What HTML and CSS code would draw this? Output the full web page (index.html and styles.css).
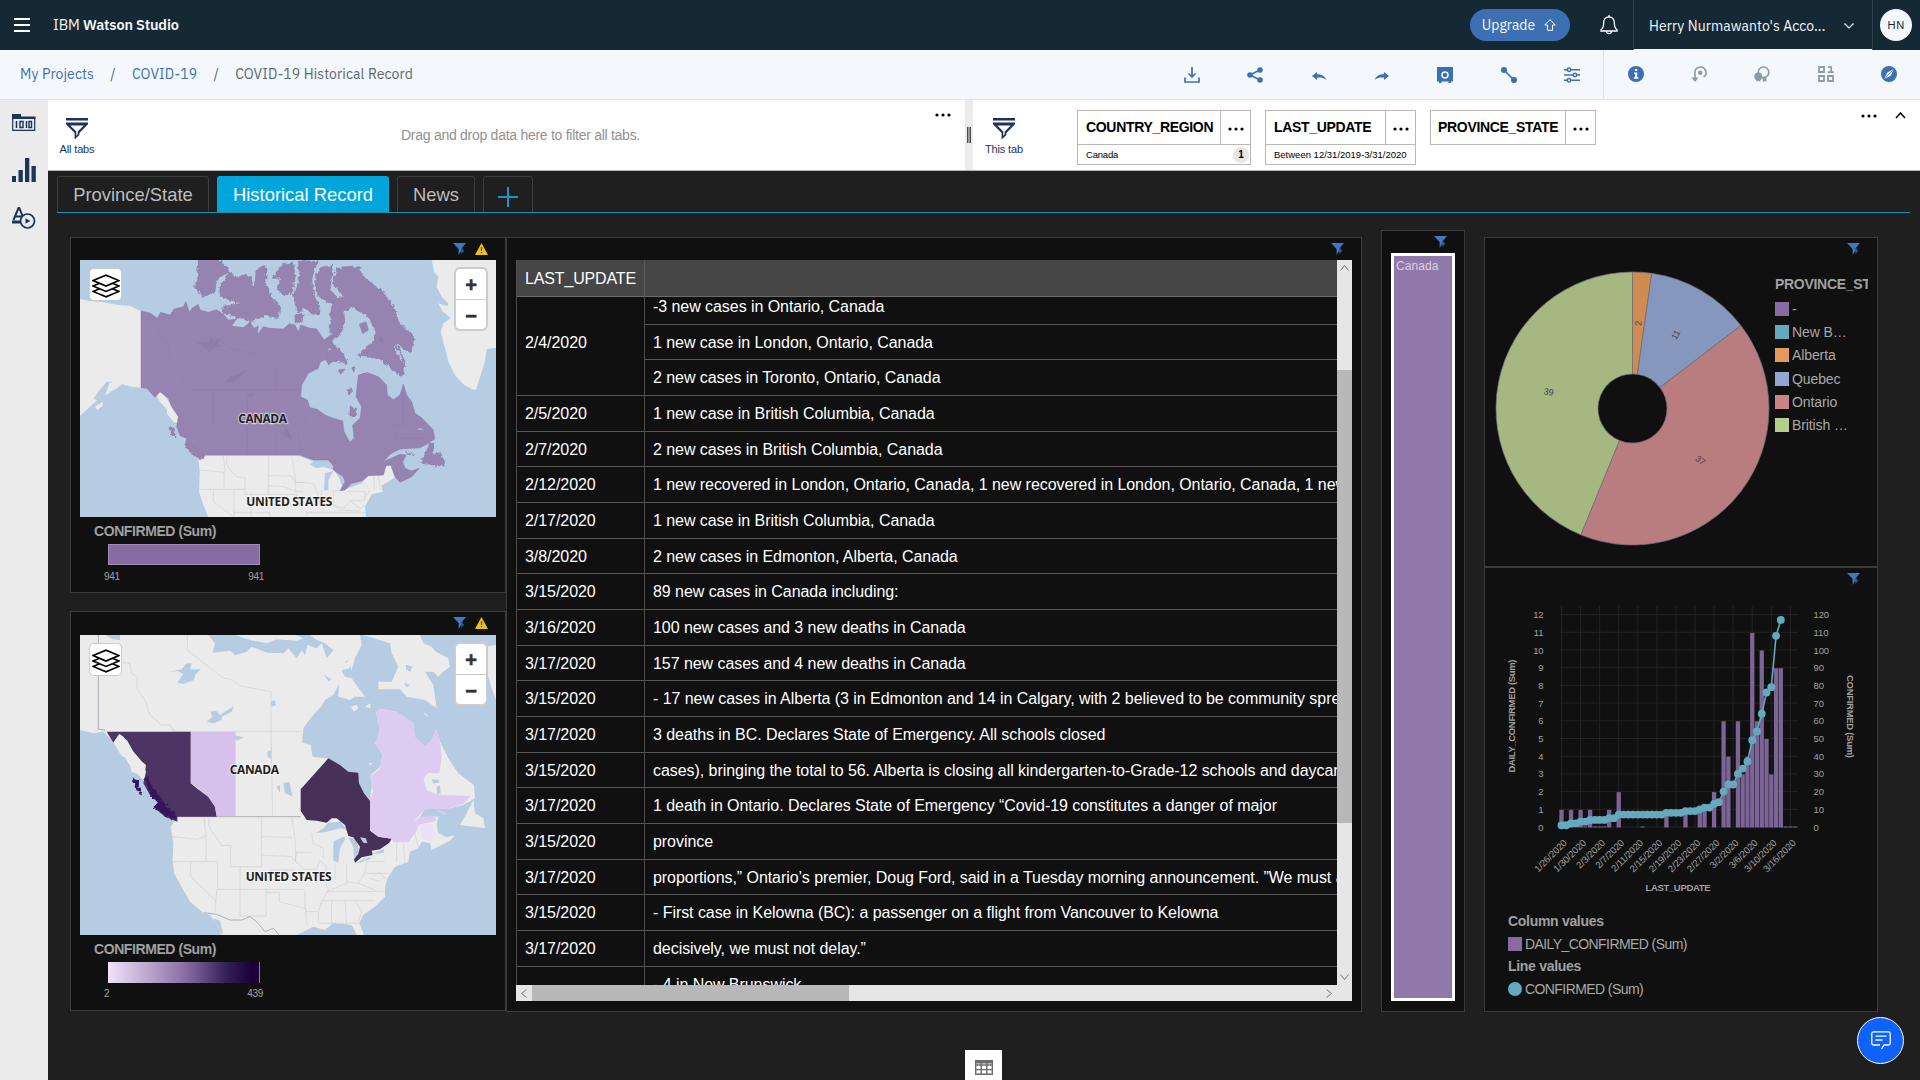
FILE: index.html
```html
<!DOCTYPE html>
<html lang="en">
<head>
<meta charset="utf-8">
<title>COVID-19 Historical Record - IBM Watson Studio</title>
<link rel="stylesheet" href="styles.css">
</head>
<body>
<svg class="defs" width="0" height="0" aria-hidden="true">
  <defs>
    <filter id="coast" x="-5%" y="-5%" width="110%" height="110%"><feTurbulence type="fractalNoise" baseFrequency="0.09" numOctaves="3" seed="4" result="n"/><feDisplacementMap in="SourceGraphic" in2="n" scale="16" xChannelSelector="R" yChannelSelector="G"/></filter>
    <symbol id="funnel" viewBox="0 0 13 12"><path d="M0 0h13L8 6v2.2L5.6 12V6z" fill="#4178be"/><path d="M8 5.500h2.400L9.500 7.300h2L8 11.500l.8-2.800H7.600z" fill="#2f5f9d"/></symbol>
    <symbol id="warn" viewBox="0 0 13 12"><path d="M6.500 0 13 12H0z" fill="#ecc313"/><path d="M5.900 4h1.300v4H5.900zM5.900 9h1.300v1.300H5.900z" fill="#5a4a05"/></symbol>
    <symbol id="dots" viewBox="0 0 16 4"><circle cx="2" cy="2" r="1.600"/><circle cx="8" cy="2" r="1.600"/><circle cx="14" cy="2" r="1.600"/></symbol>
    <symbol id="filterbig" viewBox="0 0 22 22"><path d="M0 0h22v2.400H0zM0 4.600h22v1.600L13.400 15v2L8.600 21.600V15L0 6.200z" fill="#1d3458"/><path d="M4.300 7.400h13.400L11.700 13.600v2.600l-1.400 1.500v-4.100z" fill="#fff"/></symbol>
    <symbol id="layers" viewBox="0 0 26 22"><g fill="#fff" stroke="#000" stroke-width="1.500"><path d="M1 16 13 11l12 5-12 5z"/><path d="M1 11 13 6l12 5-12 5z"/><path d="M1 6 13 1l12 5-12 5z"/></g></symbol>
  </defs>
</svg>

<header class="topbar">
  <svg class="burger" width="16" height="14" viewBox="0 0 16 14"><path d="M0 1h16M0 7h16M0 13h16" stroke="#fff" stroke-width="2"/></svg>
  <div class="brand">IBM <b>Watson Studio</b></div>
  <a class="upgrade">Upgrade<svg width="12" height="12" viewBox="0 0 12 12"><path d="M6 .7 11.200 6H8.500v5.300h-5V6H.8z" fill="none" stroke="#fff"/></svg></a>
  <svg class="bell" width="18" height="20" viewBox="0 0 18 20"><path d="M9 2c-3.600 0-5.300 2.500-5.300 5.500 0 4-.7 6-2.700 7.200V16h16v-1.300c-2-1.200-2.700-3.200-2.700-7.200C14.300 4.500 12.600 2 9 2zM9 0v2M6.500 16.500c.4 2.800 4.600 2.800 5 0" fill="none" stroke="#fff" stroke-width="1.300"/></svg>
  <div class="account"><span>Herry Nurmawanto's Acco...</span><svg width="10" height="6" viewBox="0 0 10 6"><path d="m.5.5 4.500 4.500L9.500.5" fill="none" stroke="#fff" stroke-width="1.100"/></svg></div>
  <div class="avatar">HN</div>
</header>

<nav class="toolbar">
  <div class="crumbs"><a>My Projects</a><i>/</i><a>COVID-19</a><i>/</i><span>COVID-19 Historical Record</span></div>
  <div class="tools blue">
    <svg viewBox="0 0 16 16"><path d="M1 10.500V15h14v-4.500M8 0v10M4.500 6.500 8 10l3.500-3.500" fill="none" stroke="currentColor" stroke-width="1.700"/></svg>
    <svg viewBox="0 0 16 16"><path d="M13 3 3 8l10 5" fill="none" stroke="currentColor" stroke-width="1.700"/><circle cx="13" cy="3" r="2.800"/><circle cx="3" cy="8" r="2.800"/><circle cx="13" cy="13" r="2.800"/></svg>
    <svg viewBox="0 0 16 16"><path d="M1 9 6 5v2.300c4.500 0 7.500 1.500 9.500 5.700-3-2.300-5.500-2.700-9.500-2.500V13z"/></svg>
    <svg viewBox="0 0 16 16"><path d="m15 9-5-4v2.300C5.500 7.300 2.500 8.800.5 13c3-2.300 5.500-2.700 9.500-2.500V13z"/></svg>
    <svg viewBox="0 0 16 16"><path d="M0 0h16v14.500h-2V16h-2.500v-1.500h-7V16H2v-1.500H0z"/><circle cx="8" cy="8" r="3" fill="none" stroke="#f4f7fb" stroke-width="1.500"/></svg>
    <svg viewBox="0 0 16 16"><path d="m3 3 10 10" stroke="currentColor" stroke-width="1.600"/><circle cx="3" cy="3" r="3"/><circle cx="13" cy="13" r="3"/></svg>
    <svg viewBox="0 0 16 16"><path d="M0 2.700h16M0 8h16M0 13.300h16" stroke="currentColor" stroke-width="1.500"/><g fill="#f4f7fb" stroke="currentColor" stroke-width="1.500"><circle cx="5" cy="2.700" r="1.700"/><circle cx="11" cy="8" r="1.700"/><circle cx="5" cy="13.300" r="1.700"/></g></svg>
  </div>
  <div class="tools side">
    <svg class="on" viewBox="0 0 16 16"><circle cx="8" cy="8" r="8"/><path d="M6.900 3h2.300v2H6.900zM6 6.500h3.200v4.700h1.200v1.500H5.800v-1.500H7V8H6z" fill="#fff"/></svg>
    <svg viewBox="0 0 16 16"><path d="M4 15V7a5.500 5.500 0 1 1 8.500 4.200" fill="none" stroke="currentColor" stroke-width="1.600"/><circle cx="9.200" cy="6.800" r="2.200"/><path d="M.5 11.500h7L4 16z"/></svg>
    <svg viewBox="0 0 16 16"><circle cx="9.500" cy="6.300" r="5.300" fill="none" stroke="currentColor" stroke-width="1.600"/><circle cx="4.300" cy="10.500" r="4"/><path d="M2.500 12h3.800v4L4.400 14.600 2.500 16zM8.500 11.500h4V16l-1.500-1-2 1z"/></svg>
    <svg viewBox="0 0 16 16"><path d="M1 1h5v5H1zM1 10h5v5H1zM10 10h5v5h-5z" fill="none" stroke="currentColor" stroke-width="1.800"/><path d="M10 1.200h3.200V6M9.800 6.200h6" fill="none" stroke="currentColor" stroke-width="1.700"/></svg>
    <svg class="on" viewBox="0 0 16 16"><circle cx="8" cy="8" r="8"/><path d="M12.800 3 9.700 9.700 3.200 13l3.100-6.600z" fill="#fff"/><path d="m12.500 3.300-9 9.500" stroke="#3d70b2" stroke-width=".8"/></svg>
  </div>
</nav>

<div class="workspace">
  <aside class="rail">
    <svg width="24" height="18" viewBox="0 0 24 18"><path d="M0 0h9v2.500h14.500V5H0z" fill="#1d3458"/><path d="M.7 4v12.300h22V4" fill="none" stroke="#1d3458" stroke-width="1.200"/><path d="M4.500 7v7M14.500 7v7" stroke="#1d3458" stroke-width="1.500"/><path d="M8 7.500h3v6H8zM17 7.500h2.500v6H17z" fill="none" stroke="#1d3458" stroke-width="1.400"/></svg>
    <svg width="24" height="24" viewBox="0 0 24 24"><path d="M0 18h4v6H0zM6.500 12h4.300v12H6.500zM13 0h4.300v24H13zM19.500 8h4.300v16h-4.300z" fill="#1d3458"/></svg>
    <svg width="24" height="22" viewBox="0 0 24 22"><path d="M1.500 13 6.500 1h.8l4 10M3 9.500h7" fill="none" stroke="#1d3458" stroke-width="2"/><path d="M0 13.500h9v3H0z" fill="#1d3458"/><circle cx="15.500" cy="14" r="7" fill="#ebebeb" stroke="#1d3458" stroke-width="1.700"/><path d="m13.500 11.300 4.800 2.700-4.800 2.700z" fill="#1d3458"/></svg>
  </aside>

  <main class="main">
    <section class="filters">
      <div class="pane all">
        <div class="scope"><svg width="22" height="22"><use href="#filterbig"/></svg><span>All tabs</span></div>
        <p class="hint">Drag and drop data here to filter all tabs.</p>
        <svg class="more" width="16" height="4"><use href="#dots"/></svg>
      </div>
      <div class="splitter"><i></i></div>
      <div class="pane this">
        <div class="scope"><svg width="22" height="22"><use href="#filterbig"/></svg><span>This tab</span></div>
        <div class="chips">
          <div class="chip c1"><div class="chip-top"><b>COUNTRY_REGION</b><span><svg width="16" height="4"><use href="#dots"/></svg></span></div><div class="chip-val">Canada<em>1</em></div></div>
          <div class="chip c2"><div class="chip-top"><b>LAST_UPDATE</b><span><svg width="16" height="4"><use href="#dots"/></svg></span></div><div class="chip-val">Between 12/31/2019-3/31/2020</div></div>
          <div class="chip c3"><div class="chip-top"><b>PROVINCE_STATE</b><span><svg width="16" height="4"><use href="#dots"/></svg></span></div></div>
        </div>
        <div class="pane-end"><svg width="16" height="4"><use href="#dots"/></svg><svg width="11" height="7" viewBox="0 0 11 7"><path d="m1 6 4.500-5L10 6" fill="none" stroke="#000" stroke-width="1.500"/></svg></div>
      </div>
    </section>

    <nav class="tabs">
      <a class="t1">Province/State</a><a class="t2 active">Historical Record</a><a class="t3">News</a>
      <a class="t4"><svg width="20" height="20" viewBox="0 0 20 20"><path d="M10 0v20M0 10h20" stroke="#1c94c4" stroke-width="2"/></svg></a>
    </nav>

    <section class="board">
      <div class="maps">
        <article class="panel map-a">
          <div class="panel-tools"><svg width="13" height="12"><use href="#funnel"/></svg><svg width="13" height="12"><use href="#warn"/></svg></div>
          <div class="map">
            <svg class="geo" width="416" height="257" viewBox="90 105 1248 771">
              <rect x="90" y="105" width="1248" height="771" fill="#b5cce2"/>
              <g fill="#ebebeb">
                <path d="M90 222 118 228 160 232 205 240 240 242 273 258V490L310 510 332 502 350 520 362 540 385 570 385 595 372 592 352 568 350 552 330 530 322 515 300 505 270 488 245 485 215 478 200 490 185 498 165 512 178 475 188 470 170 470 145 500 130 522 142 525 120 545 90 572z"/>
                <path d="M135 545 158 530 158 542 142 556z"/>
                <path d="M1145 105H1338V368L1310 372 1305 410 1292 450 1278 495 1265 492 1240 478 1215 450 1195 410 1185 370 1172 320 1180 295 1202 280 1185 265 1195 235 1175 215 1160 185 1165 155 1152 140z"/>
                <path d="M1165 235 1195 245 1198 265 1178 262z"/>
                <path d="M463 692H745L780 706 850 735 880 755 875 797 935 775 955 752 1000 750 1008 722 1024 720 1035 757 1012 772 995 782 998 800 965 808 945 845 948 876H475L460 840 447 800 449 740 445 700z"/>
              </g>
              <g class="states"><path d="M450 735 525 742 520 692M447 793H585M522 742V793M532 692 528 715 545 740 560 755 585 758V808H655V692M490 793V830L552 876M552 793V876M603 808V876M655 752 725 753 735 772 765 772M655 782 700 785 740 800M725 692 735 752 738 800 760 800M655 808 740 808 755 850M552 862H660V876M735 772 790 775 800 800 810 840M815 795V835M850 797V840L880 850 905 825 940 828 960 795M850 797H875M895 800H945V825M972 752V795M985 752 992 795M770 830 830 825 870 855 930 858M770 876V862H948M898 825 930 850 948 840"/></g>
              <g fill="#b5cce2"><path d="M778 718 800 705 830 698 852 722 845 732 820 726 800 730z"/><path d="M825 745 850 738 835 765 835 795 822 797z"/><path d="M855 740 885 750 888 772 875 782 868 760z"/></g>
              <path class="canada" d="M273 258 300 264 322 280 332 262 360 270 372 252 400 245 408 230 418 262 428 248 445 238 450 255 475 262 500 254 520 268 535 285 560 282 545 303 580 308 600 292 612 310 625 303 622 330 640 305 660 310 700 312 718 296 735 300 745 322 752 300 780 310 800 312 822 345 842 330 850 365 835 370 832 400 810 412 805 430 775 445 755 480 752 515 772 525 780 548 800 552 825 570 850 580 878 588 882 620 900 652 912 640 908 600 930 580 935 545 918 515 925 450 950 442 985 455 1010 480 1012 510 1030 524 1050 510 1060 478 1070 510 1085 530 1095 565 1115 578 1150 615 1154 642 1135 655 1110 668 1050 672 1020 688 1000 710 1050 688 1068 690 1058 712 1065 730 1085 738 1108 730 1085 755 1050 772 1035 755 1022 720 1008 722 1000 750 955 752 935 768 905 775 885 795 870 797 885 770 880 755 850 735 850 722 835 705 790 705 750 690H463L460 702 430 690 405 660 410 640 390 632 380 605 385 575 365 545 355 520 330 500 315 517 290 490 273 488z"/>
              <g class="canada" filter="url(#coast)">
                <path d="M445 100H500L542 138 512 155 498 170 495 200 460 215 432 187 442 160z"/>
                <path d="M508 190 540 140 560 160 580 150 605 155 605 185 615 185 618 135 648 120 648 170 662 215 690 242 685 280 650 270 600 290 560 275 520 265 518 245 572 235 512 215z"/>
                <path d="M668 160 700 115 732 115 735 165 725 205 700 210 680 190 692 160z"/>
                <path d="M745 105 803 110 785 160 790 200 812 262 790 272 765 250 740 262 730 210 748 165z"/>
                <path d="M800 210 795 160 810 130 850 120 840 190 858 215 880 215 848 175 860 130 925 125 945 160 1000 200 1032 245 1045 290 1095 340 1080 385 1038 355 1065 410 1060 455 1040 445 1000 412 950 402 920 390 965 355 978 320 950 270 905 248 885 290 870 330 845 345 840 300 845 240z"/>
                <path d="M735 270 760 265 755 295 735 290z"/>
                <path d="M845 355 870 375 895 415 860 408 832 420 830 395z"/>
                <path d="M900 430 912 425 910 445zM900 545 920 550 915 575 900 572zM892 495 905 490 902 510z"/>
                <path d="M1140 652 1150 655 1145 685 1175 690 1183 720 1165 722 1112 714 1125 690zM358 603 370 610 380 642 365 630zM405 655 440 672 462 695 450 702 415 678zM1065 680 1090 688 1080 692z"/>
              </g>
              <g fill="#b5cce2" filter="url(#coast)"><path d="M880 260 905 248 930 265 950 290 975 320 960 355 925 375 920 400 935 395 985 402 1020 430 1055 455 1040 468 1010 458 960 440 920 450 880 440 845 430 840 415 895 418 880 375 855 350 885 320z"/><path d="M1030 360 1045 375 1060 410 1048 400zM1105 608 1122 613 1108 615zM640 285 700 275 720 295 655 302zM815 262 830 262 832 320 820 300z"/></g>
              <g class="canada"><path d="M928 297 948 290 955 315 938 326zM865 435 885 432 872 448zM905 428 915 425 912 442z"/></g>
              <g fill="#8f7cab"><path d="M440 352 475 352 480 338 492 348 512 340 500 360 515 362 490 368 478 383 468 370zM528 470 540 455 560 450 590 435 560 465 548 472zM690 612 698 635 705 610 718 618 725 645 708 635zM585 513 612 505 605 512zM985 345 995 335 1003 355z"/></g>
              <g class="prov"><path d="M322 280 325 330 350 345 362 400 385 440 400 470 425 494H752M490 494V605L545 690M592 518V690M677 545 680 690M677 425V494M490 335 540 370 677 400M750 690 745 625 785 550M1060 500 1060 600 1030 600 1040 640H1130"/></g>
              <g class="place"><text x="638" y="595" textLength="146">CANADA</text><text x="718" y="844" textLength="258">UNITED STATES</text></g>
            </svg>
            <div class="layer-btn"><svg width="28" height="24"><use href="#layers"/></svg></div>
            <div class="zoomer"><span>+</span><span>&#8722;</span></div>
          </div>
          <div class="scale"><h4>CONFIRMED (Sum)</h4><div class="ramp flat"></div><div class="ends"><span>941</span><span>941</span></div></div>
        </article>

        <article class="panel map-b">
          <div class="panel-tools"><svg width="13" height="12"><use href="#funnel"/></svg><svg width="13" height="12"><use href="#warn"/></svg></div>
          <div class="map">
            <svg class="geo" width="416" height="300" viewBox="90 105 1248 900">
              <rect x="90" y="105" width="1248" height="900" fill="#b5cce2"/>
              <path fill="#ebebeb" d="M90 105H475L495 130 488 158 540 152 555 165 590 155 605 140 650 158 700 160 715 145 740 175 755 150 765 165 772 135 800 145 815 130 830 175 850 150 865 125 885 190 905 175 900 205 875 210 868 250 850 285 825 300 815 318 785 350 760 385 757 428 782 435 788 470 830 475 870 495 895 515 925 518 927 552 942 580 960 600 965 560 962 525 990 500 998 465 975 430 985 415 988 380 978 340 990 326 1040 335 1090 370 1095 412 1125 438 1145 420 1158 388 1170 425 1195 475 1225 520 1272 555 1275 595 1240 615 1200 625 1125 628 1100 665 1150 648 1165 650 1160 675 1165 700 1190 712 1215 705 1200 722 1145 750 1140 730 1115 725 1105 745 1080 755 1075 785 1035 800 1015 830 1005 860 1005 890 975 920 940 945 928 970 942 1005H920L905 975 880 972 850 970 825 990 790 980 740 1005H515L500 975 480 945 460 938 420 905 400 870 372 820 368 780 370 730 362 680 382 650 330 620 300 575 285 545 260 520 235 490 215 450 190 425 160 395 130 400 90 390z"/>
              <path fill="#ebebeb" d="M555 105H735L760 115 740 122 680 118 650 130 600 120zM780 105H930L935 135 915 175 905 210 895 180 860 200 850 150 825 130 800 120zM940 105H1110L1120 130 1145 140 1158 155 1195 175 1200 200 1180 215 1165 230 1150 215 1125 215 1150 255 1160 325 1125 300 1070 290 1050 268 985 268 985 245 1025 245 1045 200 1025 160 1020 130zM870 205 885 230 905 235 945 290 915 290 900 300 865 290zM903 320 920 315 925 325 912 335zM945 320 960 310 962 325zM1310 140 1338 135V300L1320 250 1308 200zM1270 600 1275 640 1300 655 1305 685 1230 675 1250 640zM1120 335 1138 350 1125 345zM955 490 968 488 962 497z"/>
              <g fill="#b5cce2"><path d="M990 150 1010 140 1020 155 1012 175 995 170zM355 215 395 208 410 190 425 190 420 208 452 208 435 225 432 240 400 252 382 248 400 222 385 214zM470 365 488 350 480 335 498 332 510 345 552 318 545 335 515 350 515 360 490 370zM550 405 582 412 560 422zM652 455 665 450 662 475 654 472zM700 550 718 545 728 590 705 580zM680 560 690 555 690 578zM662 305 675 300 678 315 665 320zM822 225 845 238 835 243zM1068 195 1088 200 1080 215 1068 208zM1062 248 1080 255 1070 262zM797 700 820 685 835 668 872 665 890 690 870 685 830 695zM850 725 880 710 887 715 870 745 865 788 850 782zM895 715 920 715 928 760 912 775 910 740zM915 790 960 770 962 776 930 788zM965 762 1000 748 1003 758zM490 955 510 962 520 1005 498 980zM165 105H210V120L190 118zM745 130 768 130 765 160z"/></g>
              <g class="states"><path d="M145 105V388L165 390M210 150 208 187 240 190 245 220 262 232 260 265 285 300 300 345 335 375 360 375 372 395M412 105V150L520 235 545 238 570 258 663 275V395M372 395H755M663 395 668 648M556 395V648M370 710 440 718 468 708 462 652M368 785H500M468 710V785M477 652V680L500 715 515 738 542 735V800H635V652M422 785V830L500 905M503 785V868H765M635 710 728 712M635 765 725 770 735 785 740 757H785M725 652 735 712 737 785 765 810M570 800V950M648 868V948H570M648 878H688V905L765 925M500 868 495 935M735 810H660V835M737 757 745 757M785 700 790 730 820 745 820 775M765 808H800L810 780 830 800 820 830 835 870 815 905 805 935V965M890 790V850L830 875H1005M855 790V840M820 902H975M845 902V975M885 902 890 975M915 902 935 935 925 970H805M765 935H800M890 845 925 850 945 820 950 785H1005M950 820H1015M925 850 975 870M1040 730V785M1060 730 1065 785M1105 745 1095 700 1110 670M960 835 990 845M765 875V920L772 980M968 830 985 815 1020 850"/><path class="nat" d="M145 105V388L165 390M382 650H752M462 938 500 943 540 960 575 960 600 950 620 965 645 995 670 985 688 1005"/></g>
              <path fill="#4c3565" d="M170 395H422V550L440 565 475 590 495 620 500 650H382L382 665 345 650 310 620 325 610 300 585 280 550 288 515 272 480 250 455 232 422 208 402 190 428z"/>
              <path fill="#361659" filter="url(#coast)" d="M285 535 294 532 305 560 330 590 340 610 358 610 346 616 376 642 380 662 350 650 314 625 322 608 302 588 292 560zM248 535 270 542 266 560 278 590 255 560z"/>
              <path fill="#ebebeb" d="M190 428 208 402 220 410 248 452 270 480 288 495 285 515 265 522 245 515 235 478 215 468z"/>
              <path fill="#d6c1ec" d="M423 395H556V648H500L495 620 475 590 440 562 423 548z"/>
              <path fill="#463058" d="M835 475 870 495 895 515 925 518 927 550 942 580 960 602V692L985 710 1025 716 1018 728 990 748 965 752 968 765 935 772 915 788 912 778 925 762 930 740 910 712 895 708 885 675 860 655 845 655 830 668 800 662 770 660 752 632V568z"/>
              <path fill="#b5cce2" d="M930 712 948 715 952 730 940 728z"/>
              <path fill="#ddcbf2" d="M978 340 990 326 1040 335 1090 370 1095 412 1125 438 1145 420 1158 388 1168 410 1175 470 1168 520 1135 518 1120 535 1130 570 1150 580 1170 585 1262 588 1240 612 1200 625 1125 628 1090 665 1115 650 1155 648 1160 662 1125 670 1105 675 1095 700 1075 727H1030L1025 716 985 710 960 690V600L970 575 960 530 990 505 998 465 975 430 985 415 988 380zM1155 628 1195 640 1180 645z"/>
              <path fill="#ebdffa" d="M1110 672 1148 672 1160 705 1140 722 1118 718z"/>
              <path fill="#b5cce2" d="M1145 538 1168 540 1166 548 1150 550zM1160 560 1170 556 1172 580 1162 582z"/>
              <g class="place"><text x="613" y="521" textLength="148">CANADA</text><text x="716" y="843" textLength="258">UNITED STATES</text></g>
            </svg>
            <div class="layer-btn"><svg width="28" height="24"><use href="#layers"/></svg></div>
            <div class="zoomer"><span>+</span><span>&#8722;</span></div>
          </div>
          <div class="scale"><h4>CONFIRMED (Sum)</h4><div class="ramp"></div><div class="ends"><span>2</span><span>439</span></div></div>
        </article>
      </div>

      <article class="panel list">
        <div class="panel-tools"><svg width="13" height="12"><use href="#funnel"/></svg></div>
        <div class="crosstab">
          <div class="sheet">
            <div class="head"><span>LAST_UPDATE</span><span></span></div>
            <div class="view"><div class="rows">
              <span class="d three">2/4/2020</span><span>-3 new cases in Ontario, Canada</span>
              <span>1 new case in London, Ontario, Canada</span>
              <span>2 new cases in Toronto, Ontario, Canada</span>
              <span class="d">2/5/2020</span><span>1 new case in British Columbia, Canada</span>
              <span class="d">2/7/2020</span><span>2 new cases in British Columbia, Canada</span>
              <span class="d">2/12/2020</span><span>1 new recovered in London, Ontario, Canada, 1 new recovered in London, Ontario, Canada, 1 new</span>
              <span class="d">2/17/2020</span><span>1 new case in British Columbia, Canada</span>
              <span class="d">3/8/2020</span><span>2 new cases in Edmonton, Alberta, Canada</span>
              <span class="d">3/15/2020</span><span>89 new cases in Canada including:</span>
              <span class="d">3/16/2020</span><span>100 new cases and 3 new deaths in Canada</span>
              <span class="d">3/17/2020</span><span>157 new cases and 4 new deaths in Canada</span>
              <span class="d">3/15/2020</span><span>- 17 new cases in Alberta (3 in Edmonton and 14 in Calgary, with 2 believed to be community spre</span>
              <span class="d">3/17/2020</span><span>3 deaths in BC. Declares State of Emergency. All schools closed</span>
              <span class="d">3/15/2020</span><span>cases), bringing the total to 56. Alberta is closing all kindergarten-to-Grade-12 schools and daycar</span>
              <span class="d">3/17/2020</span><span>1 death in Ontario. Declares State of Emergency “Covid-19 constitutes a danger of major</span>
              <span class="d">3/15/2020</span><span>province</span>
              <span class="d">3/17/2020</span><span>proportions,” Ontario’s premier, Doug Ford, said in a Tuesday morning announcement. ”We must a</span>
              <span class="d">3/15/2020</span><span>- First case in Kelowna (BC): a passenger on a flight from Vancouver to Kelowna</span>
              <span class="d">3/17/2020</span><span>decisively, we must not delay.”</span>
              <span class="d"></span><span>- 4 in New Brunswick</span>
            </div></div>
          </div>
          <div class="vbar"><svg width="9" height="6" viewBox="0 0 9 6"><path d="m.5 5.500 4-5 4 5" fill="none" stroke="#777"/></svg><i></i><svg width="9" height="6" viewBox="0 0 9 6"><path d="m.5.5 4 5 4-5" fill="none" stroke="#777"/></svg></div>
          <div class="hbar"><svg width="6" height="9" viewBox="0 0 6 9"><path d="m5.500.5-5 4 5 4" fill="none" stroke="#777"/></svg><i></i><svg width="6" height="9" viewBox="0 0 6 9"><path d="m.5.5 5 4-5 4" fill="none" stroke="#777"/></svg></div>
        </div>
      </article>

      <article class="panel tree">
        <div class="panel-tools"><svg width="13" height="12"><use href="#funnel"/></svg></div>
        <div class="leaf">Canada</div>
      </article>

      <div class="charts">
        <article class="panel pie">
          <div class="panel-tools"><svg width="13" height="12"><use href="#funnel"/></svg></div>
          <div class="pie-body">
            <svg id="pie" width="277" height="277" viewBox="-138.500 -138.500 277 277"></svg>
            <div class="legend">
              <h4>PROVINCE_STATE</h4>
              <p><i class="k1"></i>-</p><p><i class="k2"></i>New B…</p><p><i class="k3"></i>Alberta</p><p><i class="k4"></i>Quebec</p><p><i class="k5"></i>Ontario</p><p><i class="k6"></i>British …</p>
            </div>
          </div>
        </article>
        <article class="panel combo">
          <div class="panel-tools"><svg width="13" height="12"><use href="#funnel"/></svg></div>
          <svg id="combo" width="392" height="314" viewBox="1485 590 392 314"></svg>
          <div class="keys">
            <h4>Column values</h4><p><i class="k1"></i>DAILY_CONFIRMED (Sum)</p>
            <h4>Line values</h4><p><i class="k2 round"></i>CONFIRMED (Sum)</p>
          </div>
        </article>
      </div>
    </section>
  </main>
</div>

<div class="data-tray"><svg width="18" height="15" viewBox="0 0 18 15"><path d="M.7.7h16.600v13.600H.7zM.7 5h16.600M.7 9.600h16.600M6.200 3v11M11.800 3v11" fill="none" stroke="#6b6b6b" stroke-width="1.400"/><path d="M0 0h18v3.500H0z" fill="#6b6b6b"/></svg></div>
<div class="chat"><svg width="20" height="19" viewBox="0 0 20 19"><path d="M10.500 18 13 14h4.500a1.700 1.700 0 0 0 1.700-1.700V2.500A1.700 1.700 0 0 0 17.500.8h-15A1.700 1.700 0 0 0 .8 2.500v9.800A1.700 1.700 0 0 0 2.500 14H9M4.500 5.200h11M4.500 9h7" fill="none" stroke="#fff" stroke-width="1.300"/></svg></div>
<script src="script.js"></script>
</body>
</html>
```
FILE: styles.css
```css
* { box-sizing: border-box; }
body { margin: 0; width: 1920px; height: 1080px; overflow: hidden; background: #1f1f1f; font-family: "Liberation Sans", Arial, sans-serif; color: #000; }
svg { display: block; flex: none; }
.defs { position: absolute; }
h4, p { margin: 0; }

.topbar { height: 50px; background: #152934; display: flex; align-items: center; color: #f4f7fb; font-family: "IBM Plex Sans", "Noto Sans", sans-serif; padding-left: 14px; }
.burger { margin-right: 23px; }
.brand { font-size: 14.500px; letter-spacing: -.15px; flex: 1; padding-bottom: 2px; }
.brand b { font-weight: 600; }
.upgrade { width: 100px; height: 32px; border-radius: 16px; background: #3d70b2; display: flex; align-items: center; justify-content: center; gap: 9px; font-size: 14px; padding: 0 2px 1px 0; }
.bell { margin: 0 15px 0 30px; }
.account { width: 240px; height: 50px; border: solid #2e404a; border-width: 0 1px; display: flex; align-items: center; padding: 1px 18px 0 15px; justify-content: space-between; font-size: 14px; letter-spacing: .07px; white-space: nowrap; box-shadow: inset 0 -1px #f4f7fb; }
.avatar { width: 32px; height: 32px; border-radius: 50%; background: #f4f7fb; color: #152934; font-size: 12px; letter-spacing: .3px; display: flex; align-items: center; justify-content: center; margin: 0 8px 0 7px; padding-bottom: 2px; }

.toolbar { height: 50px; background: #f4f7fb; border-bottom: 1px solid #dfe3e6; display: flex; align-items: center; font-family: "IBM Plex Sans", "Noto Sans", sans-serif; font-size: 14px; padding-left: 20px; }
.crumbs { flex: 1; display: flex; color: #5a6872; letter-spacing: .1px; white-space: nowrap; padding-bottom: 2px; }
.crumbs a { color: #3d70b2; }
.crumbs i { font-style: normal; width: 38px; text-align: center; }
.tools { display: flex; height: 49px; align-items: center; gap: 47.300px; }
.tools svg { width: 16px; height: 16px; fill: currentColor; }
.blue { color: #3d70b2; padding-right: 23px; }
.side { color: #8c9ba5; border-left: 1px solid #dfe3e6; padding: 0 23px 2px 24px; }
.side .on { color: #3d70b2; }

.workspace { display: flex; height: 980px; }
.rail { width: 48px; background: #ebebeb; padding: 14px 12px; display: flex; flex-direction: column; gap: 25.500px; }
.main { flex: 1; display: flex; flex-direction: column; min-width: 0; }

.filters { margin-top: -1px; border-top: 1px solid #dfe3e6; display: flex; background: #fff; border-bottom: 1px solid #b3b3b3; height: 72px; }
.pane { display: flex; align-items: flex-start; }
.all { width: 917px; padding-right: 14px; }
.scope { width: 58px; padding-top: 18px; display: flex; flex-direction: column; align-items: center; font-size: 11px; letter-spacing: -.15px; }
.scope span { margin-top: 3px; color: #1d3458; }
.hint { flex: 1; text-align: center; color: #919191; font-size: 14px; letter-spacing: -.27px; line-height: 70px; }
.more { margin-top: 13px; }
.splitter { width: 8px; background: #ebebeb; display: flex; align-items: center; justify-content: center; }
.splitter i { width: 4px; height: 16px; border: solid #4a4a4a; border-width: 0 1px; background: #999; }
.this { flex: 1; padding-left: 2px; }
.chips { display: flex; margin: 10px 0 0 44px; gap: 14px; align-items: flex-start; flex: 1; }
.chip { border: 1px solid #b8b8b8; }
.chip-top { display: flex; height: 33px; font-size: 14px; }
.chip-top b { flex: 1; line-height: 33px; padding-left: 8px; letter-spacing: -.32px; white-space: nowrap; }
.chip-top span { width: 30px; border-left: 1px solid #b8b8b8; display: flex; align-items: center; justify-content: center; padding-top: 2px; }
.chip-val { border-top: 1px solid #b8b8b8; height: 20px; font-size: 9.500px; line-height: 19px; padding: 0 1px 0 8px; display: flex; justify-content: space-between; white-space: nowrap; letter-spacing: 0; }
.chip-val em { font: bold 10px/16px "Liberation Sans", Arial, sans-serif; background: #e6e6e6; border-radius: 8px; width: 16px; height: 16px; margin-top: 2px; text-align: center; }
.c1 { width: 174px; } .c2 { width: 151px; } .c3 { width: 166px; }
.c1 .chip-val { letter-spacing: -.2px; }
.c3 b { padding-left: 7px; }
.pane-end { display: flex; gap: 18px; padding: 12px 14px 0 0; align-items: center; }

.tabs { display: flex; margin: 5px 10px 0 9px; height: 37px; border-bottom: 1px solid #1c8fb5; gap: 8px; font-size: 18.400px; color: #bdbdbd; }
.tabs a { border: 1px solid #3d3d3d; border-bottom: 0; border-radius: 3px 3px 0 0; display: flex; align-items: center; justify-content: center; height: 36px; white-space: nowrap; padding-top: 1px; }
.tabs .active { background: #00a5dc; border-color: #00a5dc; color: #fff; }
.tabs .t1 { width: 152px; } .tabs .t2 { width: 172px; } .tabs .t3 { width: 78px; } .tabs .t4 { width: 50px; padding-top: 4px; }

.board { display: flex; padding: 24px 0 0 22px; align-items: flex-start; }
.panel { background: #101010; border: 1px solid #3b3b3b; overflow: hidden; }
.panel-tools { height: 22px; padding: 5px 17px 0 0; display: flex; justify-content: flex-end; gap: 9px; }
.maps { width: 436px; display: flex; flex-direction: column; gap: 18px; }
.map-a { height: 356px; } .map-b { height: 400px; } .map-b .panel-tools { height: 23px; }
.map { position: relative; margin: 0 9px; }
.layer-btn { position: absolute; left: 10px; top: 9px; width: 31px; height: 31px; border-radius: 4px; background: #fff; box-shadow: 0 0 0 1px #c5ccd4; display: flex; align-items: center; justify-content: center; padding: 2px 0 0 1px; }
.zoomer { position: absolute; right: 9px; top: 8px; width: 32px; border: 1px solid #ccc; border-radius: 5px; background: #fff; box-shadow: 0 0 0 1px #c5ccd4; font: bold 20px/31px "Liberation Sans", Arial, sans-serif; color: #333; text-align: center; -webkit-text-stroke: .6px #333; }
.zoomer span { display: block; height: 30px; padding-top: 1px; }
.zoomer span + span { border-top: 1px solid #ccc; }
.states { fill: none; stroke: #d0d0d4; stroke-width: 2; }
.nat { stroke: #b0aeb6; stroke-width: 3; }
.canada { fill: #9683b0; stroke: #8c78a9; stroke-width: 1.500; }
.prov { fill: none; stroke: #8b79a8; stroke-width: 2; opacity: .45; }
.place { font: 700 36px "Open Sans", sans-serif; fill: #222; text-anchor: middle; stroke: #fff; stroke-opacity: .5; stroke-width: 7; paint-order: stroke; stroke-linejoin: round; }
.scale { padding: 5px 0 0 23px; color: #a0a0a0; }
h4 { font-size: 14px; line-height: 18px; letter-spacing: -.3px; color: #a0a0a0; white-space: nowrap; }
.scale h4 { letter-spacing: -.42px; }
.ramp { width: 152px; height: 21px; margin: 4px 0 0 14px; border-right: 1px solid #8d76a8; background: linear-gradient(90deg, #f0e3fb, #876ca3 52%, #35205a 78%, #1d0038 95%); }
.flat { background: #876ca3; border: 1px solid #a08bb8; }
.ends { display: flex; justify-content: space-between; width: 160px; margin: 5px 0 0 10px; font-size: 10px; line-height: 13px; letter-spacing: -.3px; }
.map-b .ends { margin-top: 4px; width: 159px; }

.list { width: 856px; height: 775px; padding-bottom: 10px; }
.crosstab { display: grid; grid-template: 725px 16px / 821px 15px; margin-left: 9px; color: #fff; font-size: 16px; }
.sheet { min-width: 0; overflow: hidden; border-left: 1px solid #4c4c4c; }
.head { display: grid; grid-template-columns: 128px 1fr; height: 37px; background: #464646; border-bottom: 1px solid #6a6a6a; }
.head span { padding-left: 8px; line-height: 37px; border-right: 1px solid #5c5c5c; letter-spacing: -.15px; }
.head span + span { border: 0; }
.view { height: 688px; overflow: hidden; }
.rows { display: grid; grid-template-columns: 128px 692px; grid-auto-rows: 35.670px; margin-top: -7.900px; }
.rows span { padding-left: 8px; line-height: 35px; border-bottom: 1px solid #555; white-space: nowrap; overflow: hidden; letter-spacing: -.055px; }
.rows .d { border-right: 1px solid #4c4c4c; }
.rows .three { grid-row: span 3; line-height: 107px; }
.vbar { background: #e6e6e6; display: flex; flex-direction: column; align-items: center; padding: 5px 0; }
.vbar i { width: 15px; height: 453px; background: #b8b8b8; margin: 99px 0 auto; }
.hbar { grid-column: span 2; background: #e6e6e6; display: flex; align-items: center; padding: 0 20px 0 5px; }
.hbar i { height: 16px; width: 317px; background: #b8b8b8; margin: 0 auto 0 5px; }

.tree { width: 84px; height: 782px; margin: -7px 19px 0; }
.leaf { width: 64px; height: 748px; margin-left: 9px; border: 3px solid #fff; background: #9079aa; color: #d8cfe2; font-size: 12px; padding: 3px 0 0 2px; letter-spacing: .1px; }

.charts { width: 394px; }
.pie { height: 330px; }
.combo { height: 445px; }
.pie-body { display: flex; margin: 10px 9px 0; }
.sep { stroke: #6e6e78; stroke-width: .7; }
.slice-label { font-size: 9px; fill: #444; text-anchor: middle; }
.legend { margin: 5px 0 0 4px; flex: 1; min-width: 0; overflow: hidden; color: #a8a8a8; }
.legend h4 { margin-bottom: 4px; }
.legend p, .keys p { display: flex; align-items: center; gap: 3px; font-size: 14px; height: 23.350px; letter-spacing: -.1px; color: #a8a8a8; white-space: nowrap; }
.legend i, .keys i { width: 14px; height: 14px; flex: none; }
.k1 { background: #876ca3; } .k2 { background: #65a9be; } .k3 { background: #e39a5c; } .k4 { background: #93a6d0; } .k5 { background: #c98487; } .k6 { background: #b6cf8b; }
.round { border-radius: 50%; }
.keys { padding: 8px 0 0 23px; }
.keys h4 { line-height: 18px; height: 18px; }
.keys p { height: 27px; letter-spacing: -.58px; }

.grid { stroke: #232323; stroke-width: 1; }
.bar { fill: #7b6496; }
.tick { font-size: 9.500px; fill: #a0a0a0; letter-spacing: -.1px; }
.axis { font-size: 9.500px; font-weight: bold; fill: #a0a0a0; text-anchor: middle; }
.line { fill: none; stroke: #65a9be; stroke-width: 1.600; }
.dot { fill: #65a9be; }

.data-tray { position: fixed; left: 965px; bottom: 0; width: 37px; height: 30px; background: #fff; display: flex; justify-content: center; padding-top: 10px; }
.chat { position: fixed; left: 1857px; top: 1017px; width: 47px; height: 47px; border-radius: 50%; background: #0f62fe; border: 1px solid #fff; display: flex; align-items: center; justify-content: center; }
```
FILE: script.js
```js
const NS = 'http://www.w3.org/2000/svg';
function add(parent, tag, attrs, text) {
  const el = document.createElementNS(NS, tag);
  for (const k in attrs) el.setAttribute(k, attrs[k]);
  if (text !== undefined) el.textContent = text;
  parent.appendChild(el);
  return el;
}

// Donut: cases by province
const pie = document.getElementById('pie');
const slices = [
  { v: 2, fill: '#cf8b50', rot: -86 },
  { v: 11, fill: '#8697bd', rot: -62 },
  { v: 37, fill: '#b97d80', rot: 37 },
  { v: 39, fill: '#a6b881', rot: 11 }
];
const total = 89, R = 136.5, r = 34.5;
const at = (a, d) => [Math.sin(a) * d, -Math.cos(a) * d];
let a0 = 0;
for (const s of slices) {
  const a1 = a0 + s.v / total * 2 * Math.PI;
  const big = a1 - a0 > Math.PI ? 1 : 0;
  add(pie, 'path', { class: 'sep', fill: s.fill, d: `M${at(a0, r)} L${at(a0, R)} A${R} ${R} 0 ${big} 1 ${at(a1, R)} L${at(a1, r)} A${r} ${r} 0 ${big} 0 ${at(a0, r)}Z` });
  const [x, y] = at((a0 + a1) / 2, 85.5);
  add(pie, 'text', { class: 'slice-label', transform: `translate(${x} ${y}) rotate(${s.rot})`, y: 3 }, s.v);
  a0 = a1;
}

// Columns and line by date
const combo = document.getElementById('combo');
const X0 = 1561.5, DX = 4.768, Y0 = 827, DY = 17.7;
for (let i = 0; i <= 12; i++) {
  const y = Y0 - i * DY, x = X0 + i * DX * 4;
  add(combo, 'line', { class: 'grid', x1: 1560, x2: 1798, y1: y, y2: y });
  add(combo, 'line', { class: 'grid', x1: x, x2: x, y1: 606, y2: Y0 });
  add(combo, 'text', { class: 'tick', x: 1543.5, y: y + 3.5, 'text-anchor': 'end' }, i);
  add(combo, 'text', { class: 'tick', x: 1813.5, y: y + 3.5 }, i * 10);
}
const daily = { 0: 1, 2: 1, 4: 1, 6: 1, 10: 1, 12: 2, 22: 1, 26: 1, 29: 1, 30: 1, 32: 2, 34: 6, 35: 4, 37: 6, 38: 3, 39: 4, 40: 11, 41: 6, 42: 10, 43: 5, 44: 3, 45: 9, 46: 9, 5: 0, 7: 0, 8: 0, 9: 0, 17: 0, 47: 0, 48: 0, 49: 0 };
for (const i in daily) {
  const h = Math.max(daily[i] * DY, 1);
  add(combo, 'rect', { class: 'bar', x: X0 + i * DX - 2.15, y: Y0 + .5 - h, width: 4.3, height: h });
}
const sums = [1, 1, 2, 2, 3, 3, 4, 4, 4, 4, 5, 5, 7, 7, 7, 7, 7, 7, 7, 7, 7, 7, 8, 8, 8, 8, 9, 9, 9, 10, 11, 11, 13, 14, 20, 24, 24, 30, 33, 37, 49, 54, 64, 76, 79, 108, 117];
const pts = sums.map((v, i) => [X0 + i * DX, Y0 - v * DY / 10]);
add(combo, 'polyline', { class: 'line', points: pts.join(' ') });
for (const [x, y] of pts) add(combo, 'circle', { class: 'dot', cx: x, cy: y, r: 3.9 });
['1/26/2020', '1/30/2020', '2/3/2020', '2/7/2020', '2/11/2020', '2/15/2020', '2/19/2020', '2/23/2020', '2/27/2020', '3/2/2020', '3/6/2020', '3/10/2020', '3/16/2020'].forEach((t, i) => {
  add(combo, 'text', { class: 'tick', 'text-anchor': 'end', transform: `translate(${X0 + 6 + i * DX * 4} ${Y0 + 16.5}) rotate(-45)` }, t);
});
add(combo, 'text', { class: 'axis', x: 1678, y: 891, textLength: 65 }, 'LAST_UPDATE');
add(combo, 'text', { class: 'axis', transform: 'translate(1515 716) rotate(-90)', textLength: 113 }, 'DAILY_CONFIRMED (Sum)');
add(combo, 'text', { class: 'axis', transform: 'translate(1847 716.5) rotate(90)', textLength: 83 }, 'CONFIRMED (Sum)');
```
